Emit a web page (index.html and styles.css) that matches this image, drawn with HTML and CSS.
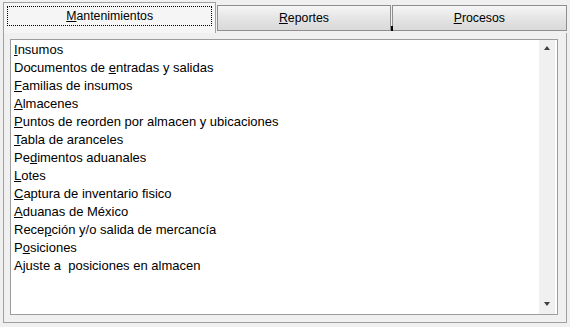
FILE: index.html
```html
<!DOCTYPE html>
<html lang="es">
<head>
    <meta charset="UTF-8">
    <title>Inventarios</title>
    <link rel="stylesheet" href="styles.css">
</head>
<body>
    <div class="window">
        <div class="tabs">
            <div class="tab active"><span class="focus"><u>M</u>antenimientos</span></div>
            <div class="tab reportes"><u>R</u>eportes</div>
            <div class="tab procesos"><u>P</u>rocesos<span class="glitch"></span></div>
        </div>
        <div class="panel">
            <div class="listbox">
                <ul class="items">
                    <li><u>I</u>nsumos</li>
                    <li>Documentos de <u>e</u>ntradas y salidas</li>
                    <li><u>F</u>amilias de insumos</li>
                    <li><u>A</u>lmacenes</li>
                    <li><u>P</u>untos de reorden por almacen y ubicaciones</li>
                    <li><u>T</u>abla de aranceles</li>
                    <li>Pe<u>d</u>imentos aduanales</li>
                    <li><u>L</u>otes</li>
                    <li><u>C</u>aptura de inventario fisico</li>
                    <li><u>A</u>duanas de México</li>
                    <li>Rece<u>p</u>ción y/o salida de mercancía</li>
                    <li>P<u>o</u>siciones</li>
                    <li>Ajuste a &nbsp;posiciones en almacen</li>
                </ul>
                <div class="scrollbar">
                    <span class="arrow up"></span>
                    <span class="arrow down"></span>
                </div>
            </div>
        </div>
    </div>
</body>
</html>
```

FILE: styles.css
```css
body {
    margin: 0;
    background: #f0f0f0;
    font-family: "Liberation Sans", Arial, sans-serif;
    font-size: 12px;
    color: #000;
}
.window {
    width: 564px;
    padding: 2px 3px 0;
}
.tabs {
    display: flex;
    align-items: flex-start;
    height: 31px;
}
.tab {
    box-sizing: border-box;
    position: relative;
    text-align: center;
    font-size: 12.3px;
}
.tab.active {
    width: 214px;
    height: 31px;
    border: 1px solid #a0a0a0;
    border-bottom: none;
    background: #f5f5f5;
    padding: 3px 3px 0 3px;
}
.focus {
    display: block;
    height: 20px;
    line-height: 18px;
    border: 1px dotted #000;
    box-sizing: border-box;
}
.tab.reportes,
.tab.procesos {
    margin-top: 3px;
    height: 26px;
    line-height: 24px;
    border: 1px solid #8e8e8e;
    background: linear-gradient(#f6f6f6, #e6e6e6 45%, #d9d9d9);
}
.tab.reportes {
    width: 174px;
    margin-left: 1px;
}
.tab.procesos {
    width: 176px;
    margin-left: 1px;
}
.glitch {
    position: absolute;
    left: -2px;
    bottom: -1px;
    width: 2px;
    height: 5px;
    background: #000;
}
.panel {
    box-sizing: border-box;
    height: 290px;
    border: 1px solid #a0a0a0;
    border-top: none;
    padding: 6px 8px 7px 6px;
}
.listbox {
    display: flex;
    height: 100%;
    box-sizing: border-box;
    border: 1px solid #9c9c9c;
    background: #fff;
}
.items {
    flex: 1;
    list-style: none;
    margin: 0;
    padding: 1px 3px;
    font-size: 13px;
}
.items li {
    height: 18px;
    line-height: 18px;
    white-space: pre;
}
.scrollbar {
    position: relative;
    width: 16px;
    margin-right: 2px;
    background: #f0f0f0;
}
.arrow {
    position: absolute;
    left: 5px;
    width: 0;
    height: 0;
    border-left: 3px solid transparent;
    border-right: 3px solid transparent;
}
.arrow.up {
    top: 6px;
    border-bottom: 4px solid #404040;
}
.arrow.down {
    bottom: 8px;
    border-top: 4px solid #404040;
}
```
